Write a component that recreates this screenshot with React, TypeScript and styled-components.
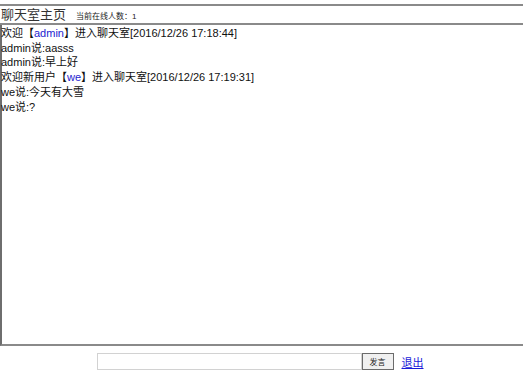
import { ReactElement } from 'react';
import styled, { createGlobalStyle } from 'styled-components';

const GlobalStyle = createGlobalStyle`
  html, body {
    margin: 0;
    padding: 0;
    background: #fff;
    overflow: hidden;
  }
  body {
    font-family: 'Liberation Sans', 'Noto Sans CJK SC', sans-serif;
  }
`;

const Page = styled.div`
  padding-top: 4px;
  width: 100%;
`;

const Header = styled.div`
  display: flex;
  align-items: center;
  height: 17px;
  border-top: 2px solid #8a8a8a;
  border-bottom: 2px solid #8a8a8a;
  padding-left: 1px;
`;

const Title = styled.span`
  font-family: 'Liberation Serif', 'Noto Sans CJK SC', serif;
  font-size: 13px;
  color: #333;
  line-height: 17px;
`;

const Online = styled.span`
  font-size: 8px;
  color: #222;
  margin-left: 10px;
  margin-top: 2px;
`;

const ChatBox = styled.div`
  height: 318px;
  border-left: 2px solid #6e6e6e;
  border-bottom: 2px solid #8a8a8a;
  padding-top: 1px;
`;

const Line = styled.div`
  font-size: 11px;
  line-height: 14.7px;
  color: #111;
  white-space: nowrap;
  margin-left: -1px;
`;

const Name = styled.span`
  color: #2323d0;
`;

const Footer = styled.div`
  display: flex;
  align-items: center;
  justify-content: center;
  margin-top: 7px;
  padding-right: 3px;
`;

const MessageInput = styled.input`
  width: 265px;
  height: 17px;
  box-sizing: border-box;
  border: 1px solid #d2d2d2;
  padding: 0 2px;
  margin: 0;
  outline: none;
`;

const SendButton = styled.button`
  height: 17px;
  width: 32px;
  box-sizing: border-box;
  border: 1px solid #6b6b6b;
  background: #f0f0f0;
  font-family: 'Noto Sans CJK SC', sans-serif;
  font-size: 8px;
  padding: 0;
  margin: 0;
  color: #222;
`;

const Exit = styled.a`
  font-size: 11px;
  color: #1a1ad8;
  text-decoration: underline;
  margin-left: 8px;
  cursor: pointer;
`;

const App = (): ReactElement => {
  return (
    <Page>
      <GlobalStyle />
      <Header>
        <Title>聊天室主页</Title>
        <Online>当前在线人数：1</Online>
      </Header>
      <ChatBox>
        <Line>
          欢迎【<Name>admin</Name>】进入聊天室[2016/12/26 17:18:44]
        </Line>
        <Line>admin说:aasss</Line>
        <Line>admin说:早上好</Line>
        <Line>
          欢迎新用户【<Name>we</Name>】进入聊天室[2016/12/26 17:19:31]
        </Line>
        <Line>we说:今天有大雪</Line>
        <Line>we说:?</Line>
      </ChatBox>
      <Footer>
        <MessageInput type="text" />
        <SendButton>发言</SendButton>
        <Exit>退出</Exit>
      </Footer>
    </Page>
  );
};

export default App;
